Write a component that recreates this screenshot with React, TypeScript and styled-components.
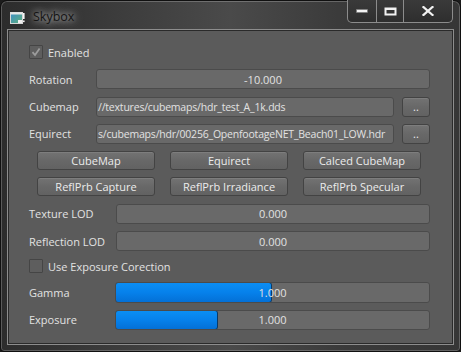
import styled, { createGlobalStyle } from "styled-components";

const GlobalStyle = createGlobalStyle`
  html, body {
    margin: 0;
    padding: 0;
    background: #1c1c1c;
  }
  body {
    font-family: "Open Sans", "Liberation Sans", sans-serif;
    font-size: 11px;
  }
`;

const Window = styled.div`
  box-sizing: border-box;
  width: 461px;
  height: 352px;
  display: flex;
  flex-direction: column;
  padding: 0 7px 7px 7px;
  border: 1px solid #101010;
  border-radius: 7px 7px 4px 4px;
  background: linear-gradient(90deg, #2c2c2c 0%, #3c3c3c 25%, #4a4a4a 50%, #3a3a3a 75%, #363636 100%);
  box-shadow: inset 0 0 0 1px rgba(255, 255, 255, 0.22);
`;

const TitleBar = styled.div`
  height: 29px;
  display: flex;
  align-items: flex-start;
  flex-shrink: 0;
`;

const TitleIcon = styled.svg`
  margin: 11px 0 0 2px;
`;

const Title = styled.div`
  margin: 6px 0 0 6px;
  padding: 0 8px 0 2px;
  font-size: 12.5px;
  line-height: 20px;
  color: #141414;
  text-shadow: 0 0 6px rgba(255, 255, 255, 0.75), 0 0 12px rgba(255, 255, 255, 0.5);
`;

const WinButtons = styled.div`
  margin-left: auto;
  margin-top: -1px;
  height: 22px;
  display: flex;
  border: 1px solid #8c8c8c;
  border-top: none;
  border-radius: 0 0 5px 5px;
  overflow: hidden;
  background: linear-gradient(180deg, #3a3a3a, #2e2e2e);
`;

const WinButton = styled.div<{ $w: number }>`
  width: ${(p) => p.$w}px;
  height: 100%;
  display: flex;
  align-items: center;
  justify-content: center;
  & + & {
    border-left: 1px solid #8c8c8c;
  }
`;

const Content = styled.div`
  flex: 1;
  background: #5b5b5b;
  border: 1px solid #2a2a2a;
  box-shadow: 0 0 0 1px #8d8d8d;
  padding: 11px 22px 0 20px;
  display: flex;
  flex-direction: column;
  gap: 7.3px;
  color: #e2e2e2;
`;

const Row = styled.div<{ $h?: number }>`
  height: ${(p) => p.$h ?? 20}px;
  display: flex;
  align-items: center;
`;

const CheckRow = styled.label`
  display: flex;
  align-items: center;
  gap: 5px;
`;

const Box = styled.span`
  box-sizing: border-box;
  width: 14px;
  height: 14px;
  border: 1px solid #454545;
  border-radius: 1px;
  background: #5e5e5e;
  display: flex;
  align-items: center;
  justify-content: center;
`;

const Label = styled.div<{ $w: number }>`
  width: ${(p) => p.$w}px;
  flex-shrink: 0;
`;

const Field = styled.div<{ $align?: string }>`
  box-sizing: border-box;
  flex: 1;
  height: 100%;
  position: relative;
  overflow: hidden;
  display: flex;
  align-items: center;
  justify-content: ${(p) => p.$align ?? "center"};
  padding: 0 1px;
  background: #696969;
  border: 1px solid #4b4b4b;
  border-radius: 3px;
  white-space: nowrap;
`;

const PathText = styled.span`
  font-size: 10.5px;
  letter-spacing: -0.2px;
`;

const Fill = styled.div`
  position: absolute;
  left: -1px;
  top: -1px;
  bottom: -1px;
  box-sizing: border-box;
  border: 1px solid #0b3a66;
  border-radius: 3px;
  background: linear-gradient(180deg, #0b8ef4 0%, #0681eb 50%, #0470d6 100%);
`;

const FieldText = styled.span`
  position: relative;
`;

const Button = styled.div<{ $w?: number }>`
  box-sizing: border-box;
  width: ${(p) => (p.$w ? `${p.$w}px` : "auto")};
  height: 100%;
  display: flex;
  align-items: center;
  justify-content: center;
  background: linear-gradient(180deg, #737373 0%, #686868 50%, #626262 100%);
  border: 1px solid #434343;
  border-radius: 3px;
  box-shadow: inset 0 1px 0 rgba(255, 255, 255, 0.08);
  color: #ececec;
`;

const BrowseButton = styled(Button)`
  margin-left: 8px;
  flex-shrink: 0;
`;

const ButtonGrid = styled.div`
  height: 19px;
  display: grid;
  grid-template-columns: repeat(3, 118px);
  column-gap: 15px;
  padding-left: 8px;
`;

function Slider({ value, ratio }: { value: string; ratio: number }) {
  return (
    <Field>
      <Fill style={{ width: `${ratio * 100}%` }} />
      <FieldText>{value}</FieldText>
    </Field>
  );
}

export default function App() {
  return (
    <>
      <GlobalStyle />
      <Window>
        <TitleBar>
          <TitleIcon width="15" height="12" viewBox="0 0 15 12">
            <defs>
              <linearGradient id="ig" x1="0" y1="0" x2="1" y2="1">
                <stop offset="0" stopColor="#3d8fc9" />
                <stop offset="1" stopColor="#5fb07a" />
              </linearGradient>
            </defs>
            <rect x="0.5" y="0.5" width="12" height="11" fill="url(#ig)" stroke="#d8d8d8" />
            <rect x="0.5" y="0.5" width="12" height="2" fill="#e8e8e8" />
            <rect x="8" y="8" width="4" height="3" fill="#f0f0f0" />
            <rect x="13" y="1" width="1.6" height="6" fill="#f4f4f4" />
            <rect x="13" y="8.5" width="1.6" height="1.6" fill="#f4f4f4" />
          </TitleIcon>
          <Title>Skybox</Title>
          <WinButtons>
            <WinButton $w={28}>
              <svg width="12" height="4" viewBox="0 0 12 4">
                <rect x="0.5" y="0.5" width="11" height="3" fill="#f2f2f2" stroke="#777" strokeWidth="0.6" />
              </svg>
            </WinButton>
            <WinButton $w={26}>
              <svg width="13" height="9" viewBox="0 0 13 9">
                <rect x="1.5" y="1.5" width="10" height="6" fill="none" stroke="#f2f2f2" strokeWidth="2" />
                <rect x="1" y="1" width="11" height="2" fill="#f2f2f2" />
              </svg>
            </WinButton>
            <WinButton $w={48}>
              <svg width="12" height="10" viewBox="0 0 12 10">
                <path d="M1.5 1 L10.5 9 M10.5 1 L1.5 9" stroke="#f2f2f2" strokeWidth="2.2" strokeLinecap="square" />
              </svg>
            </WinButton>
          </WinButtons>
        </TitleBar>
        <Content>
          <Row>
            <CheckRow>
              <Box>
                <svg width="10" height="10" viewBox="0 0 10 10">
                  <path d="M1.5 5.2 L4 8 L8.6 1.5" fill="none" stroke="#9c9c9c" strokeWidth="1.8" />
                </svg>
              </Box>
              Enabled
            </CheckRow>
          </Row>
          <Row>
            <Label $w={67}>Rotation</Label>
            <Field>-10.000</Field>
          </Row>
          <Row>
            <Label $w={67}>Cubemap</Label>
            <Field $align="flex-start">
              <PathText>//textures/cubemaps/hdr_test_A_1k.dds</PathText>
            </Field>
            <BrowseButton $w={28}>..</BrowseButton>
          </Row>
          <Row>
            <Label $w={67}>Equirect</Label>
            <Field $align="flex-start">
              <PathText>s/cubemaps/hdr/00256_OpenfootageNET_Beach01_LOW.hdr</PathText>
            </Field>
            <BrowseButton $w={28}>..</BrowseButton>
          </Row>
          <ButtonGrid>
            <Button>CubeMap</Button>
            <Button>Equirect</Button>
            <Button>Calced CubeMap</Button>
          </ButtonGrid>
          <ButtonGrid>
            <Button>ReflPrb Capture</Button>
            <Button>ReflPrb Irradiance</Button>
            <Button>ReflPrb Specular</Button>
          </ButtonGrid>
          <Row>
            <Label $w={87}>Texture LOD</Label>
            <Field>0.000</Field>
          </Row>
          <Row>
            <Label $w={87}>Reflection LOD</Label>
            <Field>0.000</Field>
          </Row>
          <Row $h={16}>
            <CheckRow>
              <Box />
              Use Exposure Corection
            </CheckRow>
          </Row>
          <Row $h={21}>
            <Label $w={86}>Gamma</Label>
            <Slider value="1.000" ratio={0.5} />
          </Row>
          <Row>
            <Label $w={86}>Exposure</Label>
            <Slider value="1.000" ratio={0.33} />
          </Row>
        </Content>
      </Window>
    </>
  );
}
